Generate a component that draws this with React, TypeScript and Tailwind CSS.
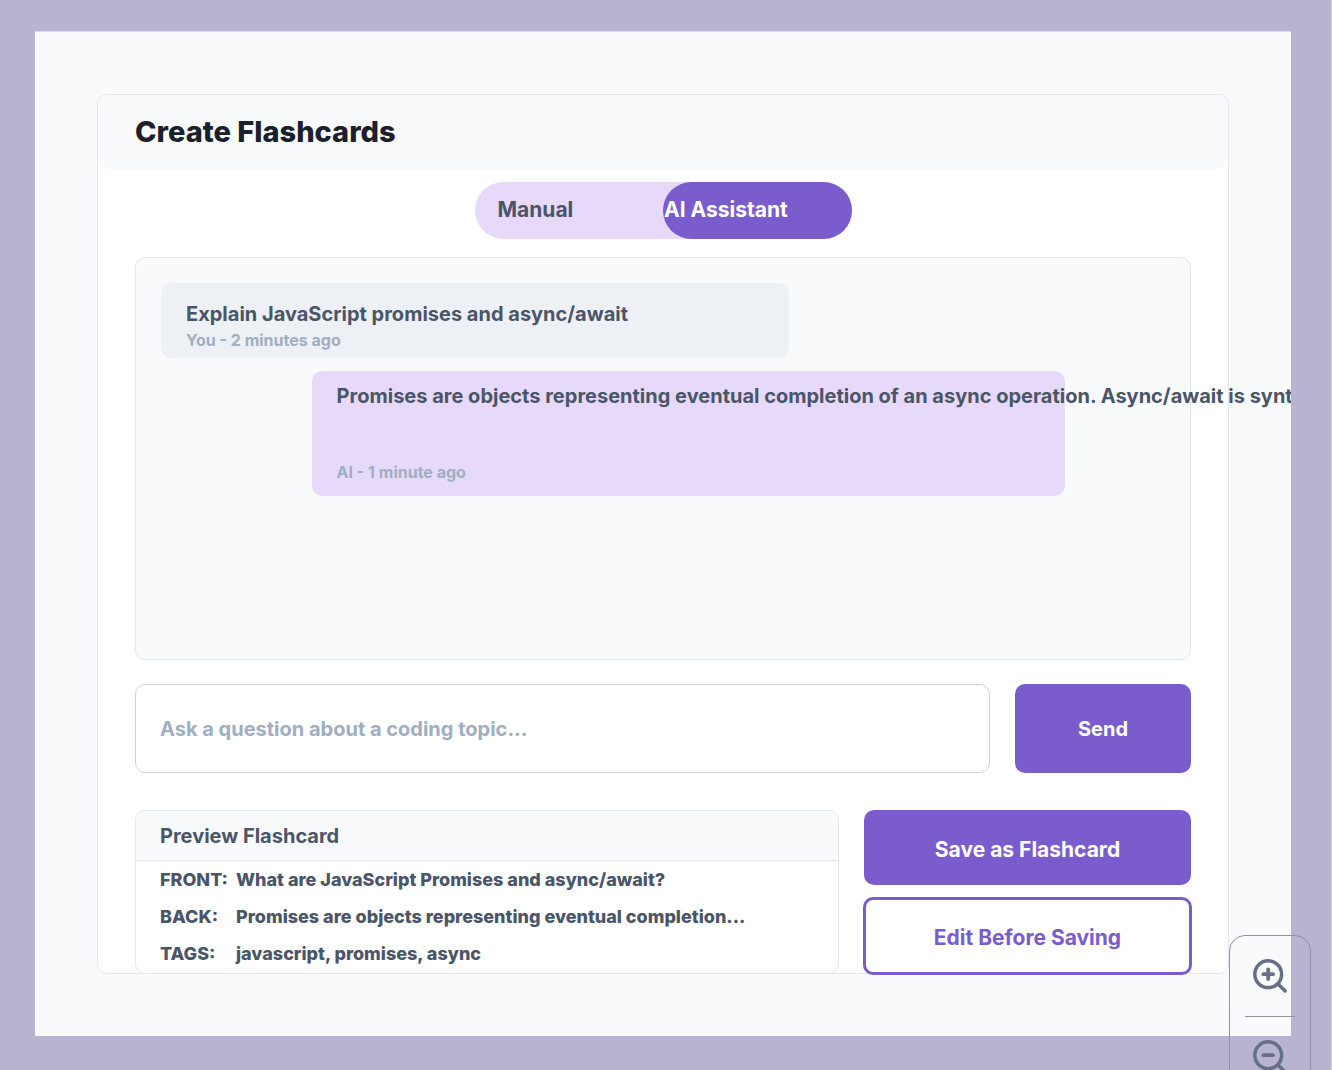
import React from "react";

function ZoomIcon({ plus = false }: { plus?: boolean }) {
  return (
    <svg
      viewBox="0 0 40 40"
      className="h-10 w-10"
      fill="none"
      stroke="#667085"
      strokeWidth="3.5"
      strokeLinecap="round"
      aria-hidden="true"
    >
      <circle cx="18.2" cy="19.2" r="13.4" />
      <path d="M28 29 L35.2 36" />
      <path d="M13.4 19.2 H23" strokeWidth="3.8" />
      {plus && <path d="M18.2 14.4 V24" strokeWidth="3.8" />}
    </svg>
  );
}

function ZoomControls() {
  return (
    <div className="absolute top-[935px] right-[20px] flex w-[82px] flex-col items-center rounded-t-2xl border border-[#9090aa] pt-[19px]">
      <button type="button" aria-label="Zoom in" className="h-10 w-10">
        <ZoomIcon plus />
      </button>
      <div className="mt-[21px] mb-[19px] h-px w-[50px] bg-[#9090aa]" />
      <button type="button" aria-label="Zoom out" className="h-10 w-10">
        <ZoomIcon />
      </button>
      <div className="h-20" />
    </div>
  );
}

const details = [
  ["FRONT:", "What are JavaScript Promises and async/await?"],
  ["BACK:", "Promises are objects representing eventual completion..."],
  ["TAGS:", "javascript, promises, async"],
];

export default function App() {
  return (
    <div className="relative min-h-screen overflow-hidden border-r border-[#d3d0de] bg-[#b9b3d2] pt-[31px] pr-10 pb-[34px] pl-[35px] font-['Inter',sans-serif] font-bold text-[#4a5568]">
      <div className="overflow-hidden border-t border-[#dcd9e8] bg-[#f8fafc] px-[62px] pt-[62px] pb-[62px]">
        <main className="rounded-[10px] border border-[#e2e8f0] bg-white">
          <header className="rounded-[10px] bg-[#f8fafc] px-[37px] py-[17px]">
            <h1 className="text-[29px] leading-10 font-extrabold text-[#1a202c]">Create Flashcards</h1>
          </header>

          <div className="px-[37px] pt-[13px]">
            <div className="mx-auto flex h-[57px] w-[377px] rounded-full bg-[#e7d9fa] text-[21px]">
              <button type="button" className="w-1/2 pb-px pl-[23px] text-left">
                Manual
              </button>
              <button type="button" className="w-1/2 rounded-full bg-[#7b5ccd] pb-px pl-px text-left text-white">
                AI Assistant
              </button>
            </div>

            <section className="mt-[18px] min-h-[403px] rounded-[10px] border border-[#e2e8f0] bg-[#f8fafc] p-[25px]">
              <article className="w-5/8 rounded-[10px] bg-[#edf1f6] px-[25px] pt-[17px] pb-[6px]">
                <p className="text-xl leading-7">Explain JavaScript promises and async/await</p>
                <p className="text-base leading-6 text-[#a0aec0]">You - 2 minutes ago</p>
              </article>
              <article className="mt-[13px] ml-[15%] w-3/4 rounded-[10px] bg-[#e7d9fa] px-[25px] pt-[11px] pb-3">
                <p className="text-xl leading-7 whitespace-nowrap">
                  Promises are objects representing eventual completion of an async operation. Async/await is syntactic sugar
                </p>
                <p className="mt-[50px] text-base leading-6 text-[#a0aec0]">AI - 1 minute ago</p>
              </article>
            </section>

            <form className="mt-6 flex gap-[25px]" onSubmit={(e) => e.preventDefault()}>
              <input
                type="text"
                aria-label="Question"
                placeholder="Ask a question about a coding topic..."
                className="h-[89px] min-w-0 flex-1 rounded-[10px] border border-[#cbd5e0] bg-white px-6 text-xl placeholder:text-[#a0aec0] placeholder:opacity-100"
              />
              <button type="submit" className="h-[89px] w-44 rounded-[10px] bg-[#7b5ccd] text-xl text-white">
                Send
              </button>
            </form>

            <div className="mt-[37px] -mb-px flex gap-6">
              <section className="min-w-0 flex-1 rounded-[10px] border border-[#e2e8f0]">
                <h2 className="rounded-t-[10px] border-b border-[#e2e8f0] bg-[#f8fafc] px-6 pt-[11px] pb-[10px] text-xl leading-7">
                  Preview Flashcard
                </h2>
                <dl className="grid grid-cols-[76px_1fr] text-lg leading-[37px] font-extrabold">
                  {details.map(([label, value]) => (
                    <React.Fragment key={label}>
                      <dt className="pl-6">{label}</dt>
                      <dd className="pl-6">{value}</dd>
                    </React.Fragment>
                  ))}
                </dl>
              </section>
              <div className="-mr-px -mb-px flex w-[329px] flex-col gap-3 text-[21px]">
                <button type="button" className="mx-px h-[75px] rounded-[10px] bg-[#7b5ccd] pt-1 text-white">
                  Save as Flashcard
                </button>
                <button
                  type="button"
                  className="h-[78px] rounded-[10px] border-[3px] border-[#7b5ccd] bg-white pt-1 text-[#7b5ccd]"
                >
                  Edit Before Saving
                </button>
              </div>
            </div>
          </div>
        </main>
      </div>
      <ZoomControls />
    </div>
  );
}
